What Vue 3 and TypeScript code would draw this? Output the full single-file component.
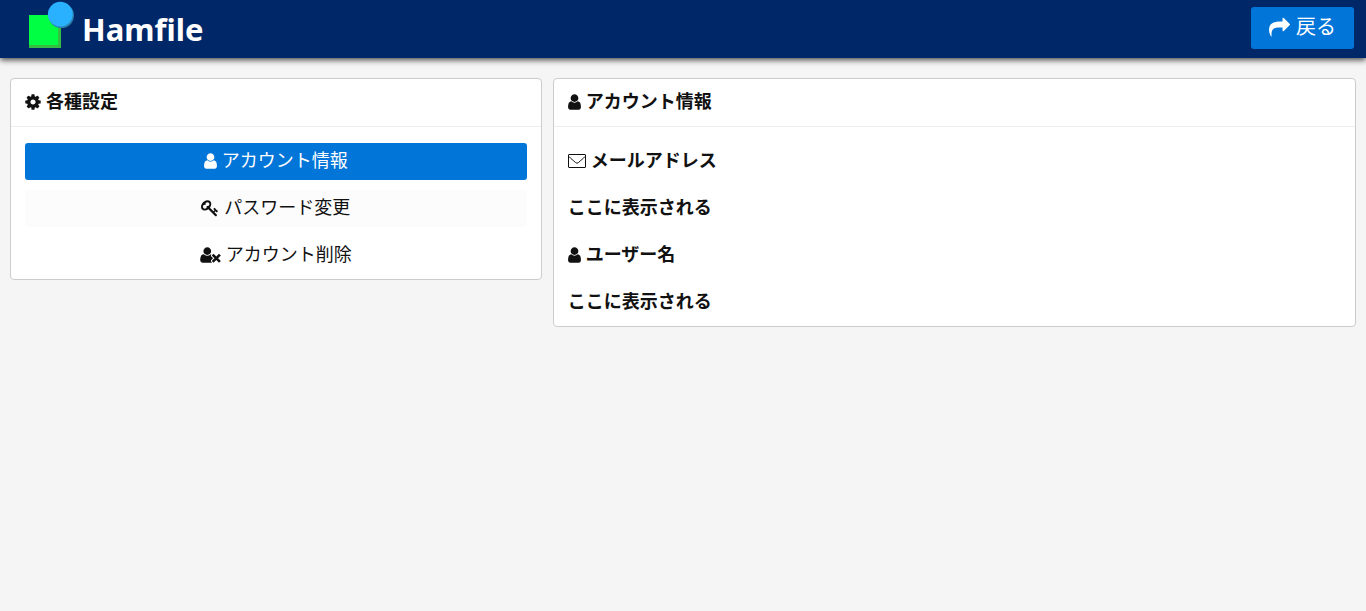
<script setup lang="ts">
import { ref } from 'vue'

interface Glyph {
  width: number
  viewBox: string
  path: string
}

const user: Glyph = {
  width: 13,
  viewBox: '256 0 1280 1792',
  path: 'M1536 1399q0 109-62.5 187t-150.5 78h-854q-88 0-150.5-78t-62.5-187q0-85 8.5-160.5t31.5-152 58.5-131 94-89 134.5-34.5q131 128 313 128t313-128q76 0 134.5 34.5t94 89 58.5 131 31.5 152 8.5 160.5zm-256-887q0 159-112.5 271.5t-271.5 112.5-271.5-112.5-112.5-271.5 112.5-271.5 271.5-112.5 271.5 112.5 112.5 271.5z',
}
const key: Glyph = {
  width: 18,
  viewBox: '0 0 1792 1792',
  path: 'M832 512q0-80-56-136t-136-56-136 56-56 136q0 42 19 83-41-19-83-19-80 0-136 56t-56 136 56 136 136 56 136-56 56-136q0-42-19-83 41 19 83 19 80 0 136-56t56-136zm851 704q0 17-49 66t-66 49q-9 0-28.5-16t-36.5-33-38.5-40-24.5-26l-96 96 220 220q28 28 28 68 0 42-39 81t-81 39q-40 0-68-28l-671-671q-176 131-365 131-163 0-265.5-102.5t-102.5-265.5q0-160 95-313t248-248 313-95q163 0 265.5 102.5t102.5 265.5q0 189-131 365l355 355 96-96q-3-3-26-24.5t-40-38.5-33-36.5-16-28.5q0-17 49-66t66-49q13 0 23 10 6 6 46 44.5t82 79.5 86.5 86 73 78 28.5 41z',
}
const userTimes: Glyph = {
  width: 21,
  viewBox: '0 0 2048 1792',
  path: 'M704 896q-159 0-271.5-112.5t-112.5-271.5 112.5-271.5 271.5-112.5 271.5 112.5 112.5 271.5-112.5 271.5-271.5 112.5zm1077 320l249 249q9 9 9 23 0 13-9 22l-136 136q-9 9-22 9-14 0-23-9l-249-249-249 249q-9 9-23 9-13 0-22-9l-136-136q-9-9-9-22 0-14 9-23l249-249-249-249q-9-9-9-23 0-13 9-22l136-136q9-9 22-9 14 0 23 9l249 249 249-249q9-9 23-9 13 0 22 9l136 136q9 9 9 22 0 14-9 23zm-498 0l-181 181q-37 37-37 91 0 53 37 90l83 83q-21 3-44 3h-874q-121 0-194-69t-73-190q0-53 3.5-103.5t14-109 26.5-108.5 43-97.5 62-81 85.5-53.5 111.5-20q19 0 39 17 154 122 319 122t319-122q20-17 39-17 28 0 57 6-28 27-41 50t-13 56q0 54 37 91z',
}
const cog: Glyph = {
  width: 16,
  viewBox: '128 0 1536 1792',
  path: 'M1152 896q0-106-75-181t-181-75-181 75-75 181 75 181 181 75 181-75 75-181zm512-109v222q0 12-8 23t-20 13l-185 28q-19 54-39 91 35 50 107 138 10 12 10 25t-9 23q-27 37-99 108t-94 71q-12 0-26-9l-138-108q-44 23-91 38-16 136-29 186-7 28-36 28h-222q-14 0-24.5-8.5t-11.5-21.5l-28-184q-49-16-90-37l-141 107q-10 9-25 9-14 0-25-11-126-114-165-168-7-10-7-23 0-12 8-23 15-21 51-66.5t54-70.5q-27-50-41-99l-183-27q-13-2-21-12.5t-8-23.5v-222q0-12 8-23t19-13l186-28q14-46 39-92-40-57-107-138-10-12-10-24 0-10 9-23 26-36 98.5-107.5t94.5-71.5q13 0 26 10l138 107q44-23 91-38 16-136 29-186 7-28 36-28h222q14 0 24.5 8.5t11.5 21.5l28 184q49 16 90 37l142-107q9-9 24-9 13 0 25 10 129 119 165 170 7 8 7 22 0 12-8 23-15 21-51 66.5t-54 70.5q26 50 41 98l183 28q13 2 21 12.5t8 23.5z',
}

const items = [
  { id: 'account', label: 'アカウント情報', icon: user },
  { id: 'password', label: 'パスワード変更', icon: key },
  { id: 'delete', label: 'アカウント削除', icon: userTimes },
]
const current = ref('account')
</script>

<template>
  <header class="bar">
    <div class="brand">
      <svg class="logo" width="48" height="48" viewBox="0 0 48 48" aria-hidden="true">
        <rect x="1" y="14" width="32" height="33" fill="#36be42" />
        <rect x="1" y="14" width="29" height="30" fill="#00ff43" />
        <circle cx="33.3" cy="14.4" r="12.7" fill="#297fac" />
        <circle cx="32.300" cy="13.2" r="12.400" fill="#29b1ff" />
      </svg>
      <h1>Hamfile</h1>
    </div>
    <button type="button" class="back">
      <svg width="21" height="21" viewBox="0 0 1792 1792" aria-hidden="true">
        <path d="M1792 640q0 26-19 45l-512 512q-19 19-45 19t-45-19-19-45v-256h-224q-98 0-175.5 6t-154 21.5-133 42.5-105.5 69.5-80 101-48.5 138.5-17.5 181q0 55 5 123 0 6 2.5 23.5t2.5 26.5q0 15-8.5 25t-23.5 10q-16 0-28-17-7-9-13-22t-13.5-30-10.5-24q-127-285-127-451 0-199 53-333 162-403 875-403h224v-256q0-26 19-45t45-19 45 19l512 512q19 19 19 45z" />
      </svg>
      <span>戻る</span>
    </button>
  </header>

  <main class="content">
    <section class="card">
      <h2 class="line title">
        <svg :width="cog.width" height="18" :viewBox="cog.viewBox" aria-hidden="true"><path :d="cog.path" /></svg>
        <span>各種設定</span>
      </h2>
      <nav class="rows">
        <button
          v-for="item in items"
          :key="item.id"
          type="button"
          class="line item"
          :class="[item.id, { active: current === item.id }]"
          @click="current = item.id"
        >
          <svg :width="item.icon.width" height="18" :viewBox="item.icon.viewBox" aria-hidden="true"><path :d="item.icon.path" /></svg>
          <span>{{ item.label }}</span>
        </button>
      </nav>
    </section>

    <section class="card">
      <h2 class="line title">
        <svg :width="user.width" height="18" :viewBox="user.viewBox" aria-hidden="true"><path :d="user.path" /></svg>
        <span>アカウント情報</span>
      </h2>
      <dl class="rows">
        <dt class="line">
          <svg width="18" height="18" viewBox="0 0 18 18" aria-hidden="true">
            <rect class="stroke" x="0.5" y="2.5" width="17" height="13" rx="0.5" />
            <path class="stroke" d="M1 4.5C3 7 5 8 7.500 10.500Q9 12 10.500 10.500C13 8 15 7 17 4.500" />
          </svg>
          <span>メールアドレス</span>
        </dt>
        <dd class="line"><span>ここに表示される</span></dd>
        <dt class="line">
          <svg :width="user.width" height="18" :viewBox="user.viewBox" aria-hidden="true"><path :d="user.path" /></svg>
          <span>ユーザー名</span>
        </dt>
        <dd class="line"><span>ここに表示される</span></dd>
      </dl>
    </section>
  </main>
</template>

<style>
body {
  margin: 0;
  background: #f5f5f5;
}
</style>

<style scoped>
.bar,
.content {
  font-family: "Noto Sans", "Noto Sans CJK JP", sans-serif;
  color: #111;
}
.bar {
  display: flex;
  align-items: center;
  justify-content: space-between;
  height: 58px;
  padding: 0 12px 0 28px;
  box-sizing: border-box;
  background: #002768;
  box-shadow: 0 2px 6px #444;
}
.brand {
  display: flex;
  align-items: center;
  gap: 6px;
}
.logo {
  margin-bottom: 8px;
}
h1 {
  margin: 0;
  font-size: 31px;
  line-height: 40px;
  color: #fff;
}
svg {
  flex: none;
  fill: currentColor;
}
.stroke {
  fill: none;
  stroke: currentColor;
}
button {
  border: 0;
  border-radius: 3px;
  font-family: inherit;
  cursor: pointer;
}
.back {
  display: flex;
  align-items: center;
  gap: 6px;
  height: 42px;
  margin-bottom: 2px;
  padding: 0 18px 2px;
  background: #0275d8;
  color: #fff;
  font-size: 20px;
  font-weight: 400;
  font-family: "Noto Sans CJK JP", sans-serif;
}
.back span {
  padding-bottom: 3px;
}
.content {
  display: grid;
  grid-template-columns: 39.5% 1fr;
  align-items: start;
  gap: 11px;
  padding: 20px 10px;
}
.card {
  background: #fff;
  border: 1px solid #ccc;
  border-radius: 4px;
}
.line {
  display: flex;
  align-items: center;
  gap: 5px;
  box-sizing: border-box;
  height: 37px;
  margin: 0;
  padding-bottom: 2px;
  font-family: "Noto Sans CJK JP", sans-serif;
  font-size: 18px;
  line-height: 26px;
  font-weight: 700;
}
.line span {
  padding-bottom: 4px;
}
.title {
  height: 48px;
  padding: 0 14px 2px;
  border-bottom: 1px solid #eee;
}
.rows {
  display: flex;
  flex-direction: column;
  gap: 10px;
  margin: 0;
  padding: 16px 14px 5px;
}
.item {
  justify-content: center;
  width: 100%;
  background: #fff;
  color: #111;
  font-weight: 400;
}
.password {
  background: #fcfcfc;
}
.active {
  background: #0275d8;
  color: #fff;
}
</style>
